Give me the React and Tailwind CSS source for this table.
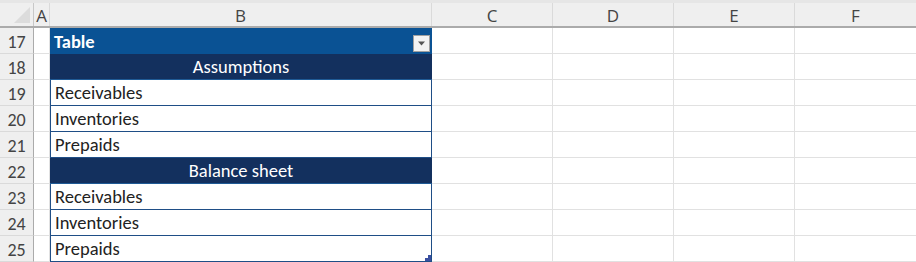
import React from "react";

const cols = ["A", "B", "C", "D", "E", "F"];
const gridCols =
  "grid grid-cols-[34px_16px_382px_121px_121px_121px_122px] leading-none overflow-hidden";

const rows = [
  { n: 17, kind: "title", text: "Table" },
  { n: 18, kind: "section", text: "Assumptions" },
  { n: 19, kind: "item", text: "Receivables" },
  { n: 20, kind: "item", text: "Inventories" },
  { n: 21, kind: "item", text: "Prepaids" },
  { n: 22, kind: "section", text: "Balance sheet" },
  { n: 23, kind: "item", text: "Receivables" },
  { n: 24, kind: "item", text: "Inventories" },
  { n: 25, kind: "item", text: "Prepaids", last: true },
];

function FilterButton() {
  return (
    <div className="absolute right-[1px] top-[7px] w-[17px] h-[17px] bg-[#f3f3f3] border border-[#a0a0a0] flex items-center justify-center">
      <svg width="9" height="5" viewBox="0 0 9 5">
        <path d="M1 0.5 L8 0.5 L4.5 4.5 Z" fill="#555" />
      </svg>
    </div>
  );
}

function TableCell({ row }) {
  if (row.kind === "title") {
    return (
      <div className="relative h-[26px] bg-[#0a5294] border-r border-[#0a5294] flex items-center pl-[4px] pt-[2px] text-white font-bold text-[18.5px]">
        {row.text}
        <FilterButton />
      </div>
    );
  }
  if (row.kind === "section") {
    return (
      <div className="h-[26px] bg-[#13305e] border-b border-[#1f5a95] flex items-center justify-center pt-[2px] text-white text-[18.5px]">
        {row.text}
      </div>
    );
  }
  return (
    <div className="relative h-[26px] bg-white border-l border-r border-b border-[#1f4e86] flex items-center pl-[4px] pt-[2px] text-[#222] text-[18.5px]">
      {row.text}
      {row.last && (
        <div className="absolute right-0 bottom-0 w-[6px] h-[6px]">
          <div className="absolute right-0 bottom-0 w-[3px] h-[6px] bg-[#3a4fa0]" />
          <div className="absolute right-0 bottom-0 w-[6px] h-[3px] bg-[#3a4fa0]" />
        </div>
      )}
    </div>
  );
}

export default function App() {
  return (
    <div
      className="w-[916px] h-[262px] bg-white overflow-hidden"
      style={{ fontFamily: "Carlito, Lato, 'Noto Sans', sans-serif" }}
    >
      <div className="h-[3px] bg-[#e6e6e6]" />
      <div className={`${gridCols} h-[25px] bg-[#efefef] border-b-2 border-[#ababab]`}>
        <div className="relative border-r border-[#c8c8c8]">
          <svg className="absolute right-[3px] bottom-[3px]" width="16" height="16" viewBox="0 0 16 16">
            <path d="M16 0 L16 16 L0 16 Z" fill="#dcdcdc" />
          </svg>
        </div>
        {cols.map((c) => (
          <div
            key={c}
            className="border-r border-[#dadada] flex items-center justify-center pt-[1px] text-[17px] text-[#444]"
            style={{ fontFamily: "'Open Sans', 'Noto Sans', sans-serif" }}
          >
            {c}
          </div>
        ))}
      </div>
      {rows.map((row) => (
        <div key={row.n} className={`${gridCols} h-[26px]`}>
          <div className="h-[26px] bg-[#efefef] border-r border-[#ababab] border-b border-b-[#dadada] flex items-center justify-center pt-[2px] text-[18px] text-[#444]">
            {row.n}
          </div>
          <div className="h-[26px] border-r border-b border-[#e1e1e1]" />
          <TableCell row={row} />
          <div className="h-[26px] border-r border-b border-[#e1e1e1]" />
          <div className="h-[26px] border-r border-b border-[#e1e1e1]" />
          <div className="h-[26px] border-r border-b border-[#e1e1e1]" />
          <div className="h-[26px] border-b border-[#e1e1e1]" />
        </div>
      ))}
    </div>
  );
}
